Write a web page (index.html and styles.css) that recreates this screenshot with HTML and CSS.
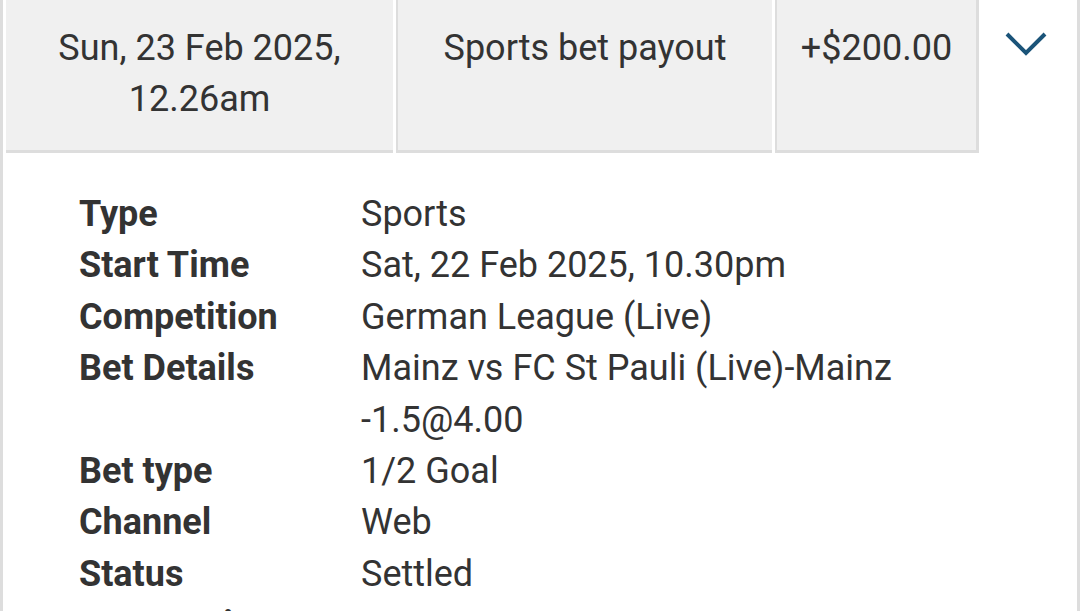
FILE: index.html
```html
<!DOCTYPE html>
<html lang="en">
<head>
    <meta charset="UTF-8">
    <meta name="viewport" content="width=device-width, initial-scale=1.0">
    <title>Transaction Details</title>
    <link rel="stylesheet" href="styles.css">
</head>
<body>

    <div class="transaction">
        <div class="summary">
            <div class="cell cell-date">Sun, 23 Feb 2025,<br>12.26am</div>
            <div class="cell cell-desc">Sports bet payout</div>
            <div class="cell cell-amount">+$200.00</div>
            <div class="toggle">
                <svg width="44" height="26" viewBox="0 0 44 26">
                    <polyline points="3,3 22,22 41,3" fill="none" stroke="#1b5479" stroke-width="4"/>
                </svg>
            </div>
        </div>

        <dl class="details">
            <dt>Type</dt>
            <dd>Sports</dd>
            <dt>Start Time</dt>
            <dd>Sat, 22 Feb 2025, 10.30pm</dd>
            <dt>Competition</dt>
            <dd>German League (Live)</dd>
            <dt>Bet Details</dt>
            <dd>Mainz vs FC St Pauli (Live)-Mainz<br>-1.5@4.00</dd>
            <dt>Bet type</dt>
            <dd>1/2 Goal</dd>
            <dt>Channel</dt>
            <dd>Web</dd>
            <dt>Status</dt>
            <dd>Settled</dd>
            <dt>Bet Receipt</dt>
            <dd>O/1234567890123</dd>
        </dl>
    </div>

</body>
</html>
```

FILE: styles.css
```css
body {
    margin: 0;
    font-family: 'Roboto', 'Liberation Sans', sans-serif;
    color: #333;
    background-color: #fff;
    overflow: hidden;
}

.transaction {
    border-left: 3px solid #ddd;
    border-right: 3px solid #ddd;
    padding-left: 3px;
    min-height: 611px;
    box-sizing: border-box;
}

.summary {
    display: grid;
    grid-template-columns: 387px 376px 204px 1fr;
    column-gap: 3px;
}

.cell {
    background-color: #f0f0f0;
    border-bottom: 3px solid #ddd;
    padding: 23px 10px 25px;
    font-size: 36px;
    line-height: 51px;
    text-align: center;
}

.cell-desc,
.cell-amount {
    border-left: 2px solid #ddd;
}

.cell-amount {
    border-right: 3px solid #ddd;
}

.toggle {
    display: flex;
    justify-content: center;
    padding: 31px 8px 0 0;
}

.details {
    display: grid;
    grid-template-columns: 282px 1fr;
    margin: 0;
    padding: 36px 0 0 73px;
    font-size: 36px;
    line-height: 51.4px;
}

.details dt {
    font-weight: bold;
}

.details dd {
    margin: 0;
}
```
